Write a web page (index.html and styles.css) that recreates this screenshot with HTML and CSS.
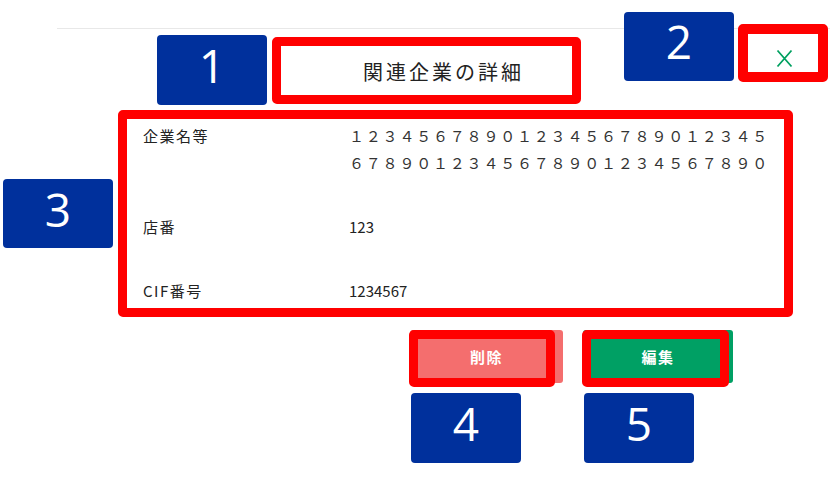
FILE: index.html
```html
<!DOCTYPE html>
<html lang="ja">
<head>
<meta charset="utf-8">
<title>関連企業の詳細</title>
<link rel="stylesheet" href="styles.css">
</head>
<body>
<div class="page">
  <div class="modal">
    <div class="modal-header">
      <span class="spacer"></span>
      <h1 class="title">関連企業の詳細</h1>
      <button class="close" aria-label="閉じる">
        <svg width="17" height="19" viewBox="0 0 17 19"><path d="M1.5 1.5 L15.5 17.5 M15.5 1.5 L1.5 17.5" stroke="#00a060" stroke-width="1.8" fill="none"/></svg>
      </button>
    </div>
    <div class="details">
      <div class="row">
        <div class="label">企業名等</div>
        <div class="value wide">１２３４５６７８９０１２３４５６７８９０１２３４５６７８９０１２３４５６７８９０１２３４５６７８９０</div>
      </div>
      <div class="row">
        <div class="label">店番</div>
        <div class="value">123</div>
      </div>
      <div class="row">
        <div class="label">CIF番号</div>
        <div class="value">1234567</div>
      </div>
    </div>
    <div class="actions">
      <button class="btn btn-delete">削除</button>
      <button class="btn btn-edit">編集</button>
    </div>
  </div>

  <div class="mark red r1"></div>
  <div class="mark red r2"></div>
  <div class="mark red r3"></div>
  <div class="mark red r4"></div>
  <div class="mark red r5"></div>

  <div class="num n1">1</div>
  <div class="num n2">2</div>
  <div class="num n3">3</div>
  <div class="num n4">4</div>
  <div class="num n5">5</div>
</div>
</body>
</html>
```

FILE: styles.css
```css
html, body {
  margin: 0;
  padding: 0;
  background: #fff;
}
body {
  font-family: "Noto Sans CJK JP", "Noto Sans", sans-serif;
  color: #222;
  width: 830px;
  height: 491px;
  overflow: hidden;
}
.page {
  position: relative;
  width: 830px;
  height: 491px;
}
.modal {
  position: relative;
  top: 28px;
  margin-left: 57px;
  width: 773px;
  border-top: 1px solid #e8e8e8;
}
.modal-header {
  display: grid;
  grid-template-columns: 1fr auto 1fr;
  align-items: start;
  padding-top: 29px;
}
.title {
  margin: 0;
  font-size: 20px;
  line-height: 28px;
  font-weight: normal;
  letter-spacing: 3px;
  color: #222;
}
.close {
  justify-self: end;
  margin: -9px 37px 0 0;
  padding: 0;
  border: 0;
  background: none;
  width: 17px;
  height: 19px;
  display: flex;
}
.details {
  display: flex;
  flex-direction: column;
  gap: 37px;
  padding: 36px 0 0 86px;
}
.row {
  display: flex;
  font-size: 15px;
  line-height: 27px;
}
.label {
  width: 206px;
  letter-spacing: 1.5px;
  flex: none;
}
.value {
  flex: none;
}
.value.wide {
  width: 428px;
  word-break: break-all;
  letter-spacing: 1.8px;
  color: #333;
}
.actions {
  display: flex;
  gap: 20px;
  padding: 26px 0 0 353px;
}
.btn {
  height: 53px;
  border: 0;
  border-radius: 3px;
  color: #fff;
  font-family: "Noto Sans CJK JP", sans-serif;
  font-weight: bold;
  font-size: 15px;
  letter-spacing: 1.5px;
  padding: 0;
}
.btn-delete {
  width: 153px;
  background: #f46e6e;
}
.btn-edit {
  width: 150px;
  background: #00a064;
}

/* annotation overlays */
.mark {
  position: absolute;
  box-sizing: border-box;
  border: 9px solid #ff0000;
  border-radius: 5px;
}
.r1 { left: 272px; top: 37px; width: 309px; height: 67px; }
.r2 { left: 738px; top: 24px; width: 90px; height: 58px; border-width: 10px; }
.r3 { left: 118px; top: 110px; width: 675px; height: 207px; }
.r4 { left: 409px; top: 330px; width: 146px; height: 57px; }
.r5 { left: 582px; top: 330px; width: 147px; height: 57px; }

.num {
  position: absolute;
  width: 110px;
  height: 70px;
  background: #00309c;
  border-radius: 4px;
  color: #fff;
  font-family: "Open Sans", "Noto Sans", sans-serif;
  font-size: 46px;
  line-height: 60px;
  text-align: center;
}
.n1 { left: 157px; top: 35px; }
.n2 { left: 624px; top: 12px; height: 69px; line-height: 58px; }
.n3 { left: 3px; top: 179px; height: 69px; }
.n4 { left: 411px; top: 393px; }
.n5 { left: 584px; top: 393px; }
```
